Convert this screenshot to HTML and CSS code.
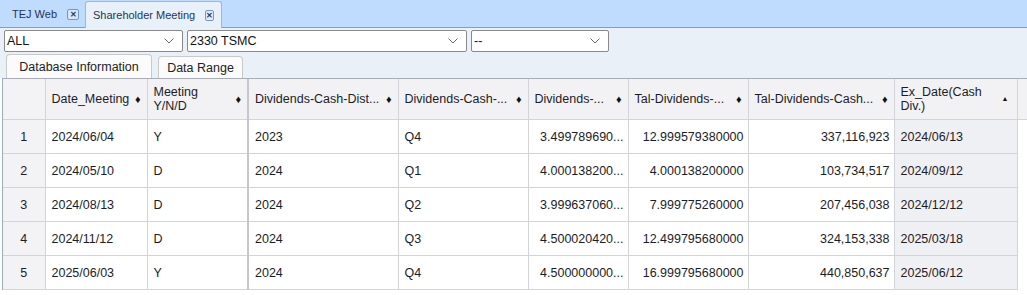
FILE: index.html
```html
<!DOCTYPE html>
<html lang="en">

<head>
    <meta charset="UTF-8">
    <title>Shareholder Meeting</title>
    <link rel="stylesheet" href="styles.css">
</head>

<body>
    <div class="tabbar">
        <div class="tab">
            <span>TEJ Web</span>
            <span class="close">&#x2715;</span>
        </div>
        <div class="tab active">
            <span>Shareholder Meeting</span>
            <span class="close">&#x2715;</span>
        </div>
    </div>

    <div class="toolbar">
        <div class="selects">
            <div class="select sel-market">
                <span>ALL</span>
                <svg class="chev" width="10" height="6" viewBox="0 0 10 6"><path d="M0.5 0.5 L5 5 L9.5 0.5" fill="none" stroke="#666" stroke-width="1"/></svg>
            </div>
            <div class="select sel-stock">
                <span>2330 TSMC</span>
                <svg class="chev" width="10" height="6" viewBox="0 0 10 6"><path d="M0.5 0.5 L5 5 L9.5 0.5" fill="none" stroke="#666" stroke-width="1"/></svg>
            </div>
            <div class="select sel-other">
                <span>--</span>
                <svg class="chev" width="10" height="6" viewBox="0 0 10 6"><path d="M0.5 0.5 L5 5 L9.5 0.5" fill="none" stroke="#666" stroke-width="1"/></svg>
            </div>
        </div>
        <div class="buttons">
            <button class="btn btn-info">Database Information</button>
            <button class="btn btn-range">Data Range</button>
        </div>
    </div>

    <div class="grid">
        <table>
            <colgroup>
                <col style="width:42px">
                <col style="width:102px">
                <col style="width:101px">
                <col style="width:150px">
                <col style="width:130px">
                <col style="width:100px">
                <col style="width:120px">
                <col style="width:146px">
                <col style="width:123px">
                <col>
            </colgroup>
            <thead>
                <tr>
                    <th class="rownum"></th>
                    <th><div class="hd"><span>Date_Meeting</span><i class="sort">&#9830;</i></div></th>
                    <th class="frozen"><div class="hd"><span>Meeting<br>Y/N/D</span><i class="sort">&#9830;</i></div></th>
                    <th><div class="hd"><span>Dividends-Cash-Dist...</span><i class="sort">&#9830;</i></div></th>
                    <th><div class="hd"><span>Dividends-Cash-...</span><i class="sort">&#9830;</i></div></th>
                    <th><div class="hd"><span>Dividends-...</span><i class="sort">&#9830;</i></div></th>
                    <th><div class="hd"><span>Tal-Dividends-...</span><i class="sort">&#9830;</i></div></th>
                    <th><div class="hd"><span>Tal-Dividends-Cash...</span><i class="sort">&#9830;</i></div></th>
                    <th><div class="hd"><span>Ex_Date(Cash<br>Div.)</span><i class="sort asc">&#9650;</i></div></th>
                    <th class="filler"></th>
                </tr>
            </thead>
            <tbody>
                <tr>
                    <td class="rownum">1</td>
                    <td>2024/06/04</td>
                    <td class="frozen">Y</td>
                    <td>2023</td>
                    <td>Q4</td>
                    <td class="num">3.499789690...</td>
                    <td class="num">12.999579380000</td>
                    <td class="num">337,116,923</td>
                    <td class="sorted">2024/06/13</td>
                    <td class="filler"></td>
                </tr>
                <tr>
                    <td class="rownum">2</td>
                    <td>2024/05/10</td>
                    <td class="frozen">D</td>
                    <td>2024</td>
                    <td>Q1</td>
                    <td class="num">4.000138200...</td>
                    <td class="num">4.000138200000</td>
                    <td class="num">103,734,517</td>
                    <td class="sorted">2024/09/12</td>
                    <td class="filler"></td>
                </tr>
                <tr>
                    <td class="rownum">3</td>
                    <td>2024/08/13</td>
                    <td class="frozen">D</td>
                    <td>2024</td>
                    <td>Q2</td>
                    <td class="num">3.999637060...</td>
                    <td class="num">7.999775260000</td>
                    <td class="num">207,456,038</td>
                    <td class="sorted">2024/12/12</td>
                    <td class="filler"></td>
                </tr>
                <tr>
                    <td class="rownum">4</td>
                    <td>2024/11/12</td>
                    <td class="frozen">D</td>
                    <td>2024</td>
                    <td>Q3</td>
                    <td class="num">4.500020420...</td>
                    <td class="num">12.499795680000</td>
                    <td class="num">324,153,338</td>
                    <td class="sorted">2025/03/18</td>
                    <td class="filler"></td>
                </tr>
                <tr>
                    <td class="rownum">5</td>
                    <td>2025/06/03</td>
                    <td class="frozen">Y</td>
                    <td>2024</td>
                    <td>Q4</td>
                    <td class="num">4.500000000...</td>
                    <td class="num">16.999795680000</td>
                    <td class="num">440,850,637</td>
                    <td class="sorted">2025/06/12</td>
                    <td class="filler"></td>
                </tr>
            </tbody>
        </table>
    </div>
</body>

</html>
```

FILE: styles.css
```css
body {
    margin: 0;
    font-family: "Liberation Sans", Arial, sans-serif;
    color: #1c1c28;
    background: #fff;
    overflow: hidden;
}

/* tab strip */
.tabbar {
    height: 27px;
    background: #bfdcfe;
    border-bottom: 1px solid #7b9ed8;
    display: flex;
    align-items: flex-end;
    padding-left: 2px;
}

.tab {
    height: 26px;
    display: flex;
    align-items: center;
    padding: 0 6px 0 10px;
    font-size: 11px;
    color: #1f3556;
    white-space: nowrap;
    box-sizing: border-box;
}

.tab .close {
    display: inline-block;
    width: 10px;
    height: 9px;
    margin-left: 10px;
    border: 1px solid #7a95c0;
    border-radius: 2px;
    background: #d6e6fb;
    font-size: 8px;
    font-weight: bold;
    line-height: 9px;
    text-align: center;
    color: #1d3a6e;
}

.tab.active {
    padding-left: 7px;
    width: 137px;
    background: #e8f0f9;
    border: 1px solid #9ab6e2;
    border-bottom: none;
    border-radius: 3px 3px 0 0;
    height: 27px;
    margin-bottom: -1px;
    justify-content: space-between;
}

.tab.active .close {
    margin-right: 5px;
    background: #e2ecf8;
}

/* toolbar */
.toolbar {
    background: #e9f0f8;
    padding: 2px 0 0 4px;
    height: 50px;
    box-sizing: border-box;
}

.selects {
    display: flex;
    gap: 4px;
}

.select {
    height: 22px;
    background: #fff;
    border: 1px solid #8a8a8a;
    border-radius: 2px;
    box-sizing: border-box;
    display: flex;
    align-items: center;
    justify-content: space-between;
    padding: 0 8px 0 2px;
    font-size: 12.5px;
    color: #111;
}

.sel-market {
    width: 179px;
}

.sel-stock {
    width: 280px;
}

.sel-other {
    width: 138px;
}

.buttons {
    display: flex;
    align-items: flex-end;
    gap: 6px;
    margin: 2px 0 0 2px;
}

.btn {
    font-family: "Liberation Sans", Arial, sans-serif;
    font-size: 12.5px;
    color: #222;
    background: #fbfbfb;
    border: 1px solid #c9c9c9;
    border-bottom: none;
    border-radius: 4px 4px 0 0;
    height: 24px;
    padding: 0;
    white-space: nowrap;
}

.btn-info {
    width: 146px;
}

.btn-range {
    width: 85px;
    height: 22px;
}

/* grid */
.grid {
    margin-left: 2px;
    border-left: 1px solid #9aaed0;
    border-top: 1px solid #a8acb6;
}

table {
    width: 1025px;
    border-collapse: collapse;
    table-layout: fixed;
    font-size: 12.5px;
}

th {
    height: 40px;
    background: #f2f2f5;
    font-weight: normal;
    text-align: left;
    padding: 0 5px 0 6px;
    border-right: 1px solid #d3d3da;
    border-bottom: 1px solid #d3d3da;
    line-height: 14px;
    overflow: hidden;
    white-space: nowrap;
}

.hd {
    display: flex;
    align-items: center;
    justify-content: space-between;
}

.sort {
    font-style: normal;
    font-size: 11px;
    color: #111;
    margin-right: 1px;
}

.sort.asc {
    font-size: 7px;
    margin-right: 3px;
}

td {
    height: 33px;
    padding: 0 4px 0 6px;
    border-right: 1px solid #d3d3da;
    border-bottom: 1px solid #d3d3da;
    white-space: nowrap;
    overflow: hidden;
}

.rownum {
    background: #f3f3f6;
    text-align: center;
    padding: 0;
}

.frozen {
    border-right: 2px solid #c6c6ce;
}

.num {
    text-align: right;
}

.sorted {
    background: #eff0f3;
}

.filler {
    border-right: none;
    background: #fff;
}

th.filler {
    background: #f2f2f5;
}

tbody .filler {
    border-bottom: none;
}
```
